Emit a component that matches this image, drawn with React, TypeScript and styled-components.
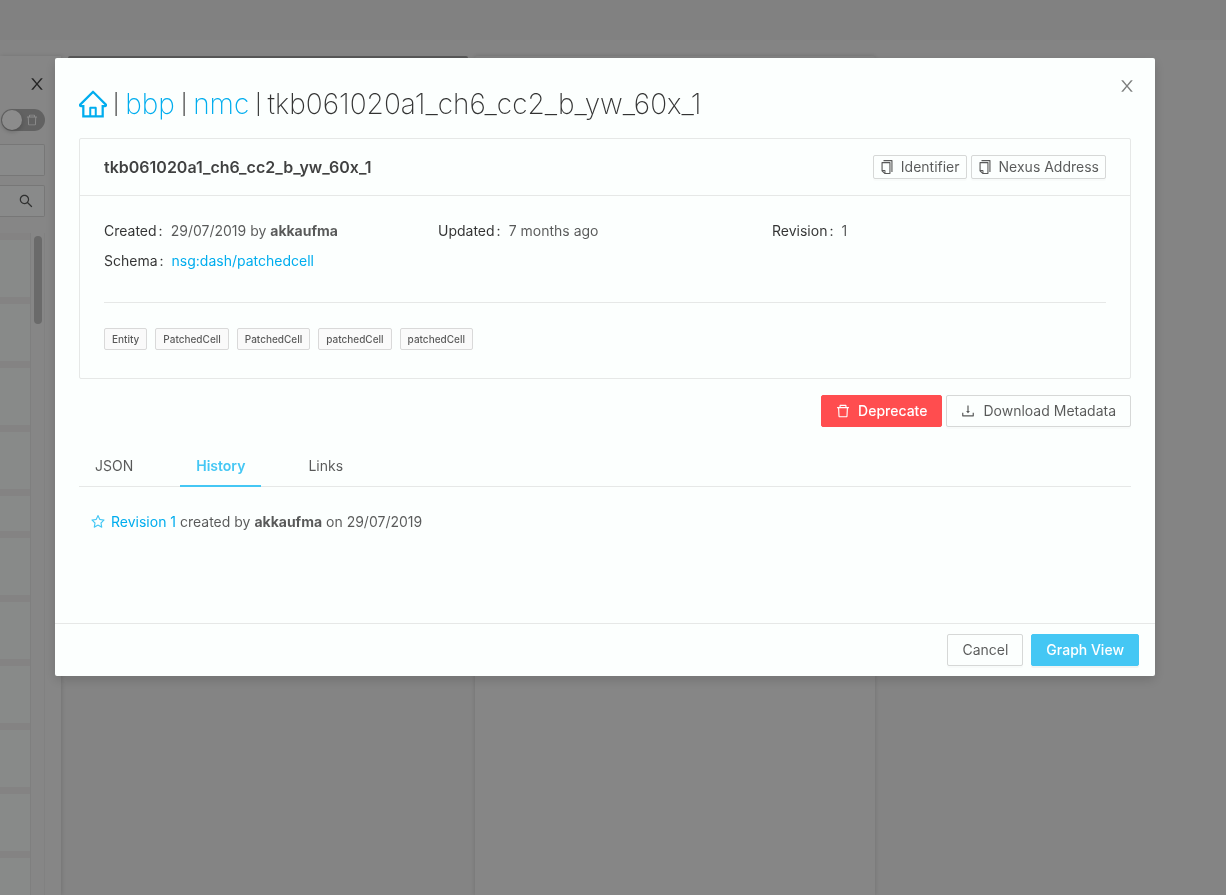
import React from 'react';
import styled, { createGlobalStyle, css } from 'styled-components';
import {
  AiOutlineCopy,
  AiOutlineDelete,
  AiOutlineDownload,
  AiOutlineHome,
  AiOutlineSearch,
  AiOutlineStar,
} from 'react-icons/ai';

const GlobalStyle = createGlobalStyle`
  *, *::before, *::after { box-sizing: border-box; }
  body {
    margin: 0;
    font-family: Inter, "Liberation Sans", sans-serif;
    font-size: 14px;
    line-height: 22px;
    color: rgba(0, 0, 0, 0.65);
  }
  button, input { font: inherit; color: inherit; }
  a { color: #00adee; text-decoration: none; }
  strong { font-weight: 700; }
  svg { display: block; flex: none; }
`;

/* The icon artwork keeps a 64-unit margin; this view box trims it. */
const TRIMMED = '64 64 896 896';

const CloseIcon = ({ size = 16 }: { size?: number }) => (
  <svg width={size} height={size} viewBox={TRIMMED} fill="currentColor" aria-hidden="true">
    <path d="M563.8 512l262.5-312.9c4.4-5.2.7-13.1-6.1-13.1h-79.8c-4.7 0-9.2 2.1-12.3 5.7L511.6 449.8 295.1 191.7c-3-3.6-7.5-5.7-12.3-5.7H203c-6.8 0-10.5 7.9-6.1 13.1L459.4 512 196.9 824.9A7.95 7.95 0 0 0 203 838h79.8c4.7 0 9.2-2.1 12.3-5.7l216.5-258.1 216.5 258.1c3 3.6 7.5 5.7 12.3 5.7h79.8c6.8 0 10.5-7.9 6.1-13.1L563.8 512z" />
  </svg>
);

/* ---------- workspace behind the dialog ---------- */

const Workspace = styled.div`
  height: 100vh;
  overflow: hidden;
  display: flex;
  flex-direction: column;
  background: #f0f0f0;
`;

const TopBar = styled.header`
  flex: none;
  height: 40px;
  background: #ececec;
`;

const Columns = styled.div`
  flex: 1;
  min-height: 0;
  display: flex;
  padding-top: 16px;
`;

const Sidebar = styled.aside`
  flex: none;
  width: 61px;
  padding: 20px 16px 0 0;
  display: flex;
  flex-direction: column;
  overflow: hidden;
  background: #f4f4f4;
  box-shadow: 1px 0 4px rgba(0, 0, 0, 0.12);
`;

const SidebarClose = styled.button`
  align-self: flex-end;
  padding: 0;
  margin-bottom: 17px;
  border: 0;
  background: none;
  color: #444;
`;

const Toggle = styled.button`
  align-self: flex-end;
  flex: none;
  width: 44px;
  height: 22px;
  margin-bottom: 13px;
  padding: 0 7px 0 1px;
  display: flex;
  align-items: center;
  justify-content: space-between;
  border: 0;
  border-radius: 11px;
  background: #b2b2b2;
  color: #fff;
`;

const Knob = styled.span`
  width: 20px;
  height: 20px;
  border-radius: 50%;
  background: #fff;
  box-shadow: 0 2px 4px rgba(0, 0, 0, 0.2);
`;

const Field = styled.label`
  flex: none;
  height: 32px;
  margin-bottom: 9px;
  padding-right: 11px;
  display: flex;
  align-items: center;
  border: 1px solid #d9d9d9;
  border-left: 0;
  border-radius: 0 2px 2px 0;
  background: #fafcfb;

  input {
    flex: 1;
    width: 0;
    padding: 0;
    border: 0;
    outline: 0;
    background: none;
  }
`;

const ListFrame = styled.div`
  flex: 1;
  min-height: 0;
  margin-top: 7px;
  display: flex;
  border-right: 1px solid #ececec;
`;

const List = styled.ul`
  flex: 1;
  margin: 0;
  padding: 7px 0 0;
  overflow: hidden;
  list-style: none;
  background: #f0eeee;
  border-right: 1px solid #e8e8e8;
`;

const ListItem = styled.li<{ $short?: boolean }>`
  height: ${p => (p.$short ? 35 : 57)}px;
  margin-bottom: 7px;
  background: #f8fbf9;
`;

const ScrollTrack = styled.div`
  width: 13px;
  padding: 3px 2px 3px 3px;
`;

const ScrollThumb = styled.div`
  height: 88px;
  border-radius: 4px;
  background: #c1c1c1;
`;

const Panel = styled.section<{ $selected?: boolean }>`
  flex: none;
  width: 400px;
  margin-left: 7px;
  border-top: 2px solid ${p => (p.$selected ? '#a0a0a0' : '#ececec')};
  border-radius: 2px 2px 0 0;
  background: ${p => (p.$selected ? '#f0f0f0' : '#f4f4f4')};
  box-shadow: ${p => (p.$selected ? 'none' : '0 0 4px rgba(0, 0, 0, 0.14)')};
`;

/* ---------- dialog ---------- */

const Overlay = styled.div`
  position: fixed;
  inset: 0;
  padding: 58px 16px 24px 0;
  overflow: auto;
  background: rgba(0, 0, 0, 0.45);
`;

const Dialog = styled.div`
  position: relative;
  width: 100%;
  max-width: 1100px;
  margin: 0 auto;
  border-radius: 2px;
  background: #fcfffe;
  box-shadow: 0 4px 12px rgba(0, 0, 0, 0.15);
`;

const DialogClose = styled.button`
  position: absolute;
  top: 20px;
  right: 20px;
  padding: 0;
  border: 0;
  background: none;
  color: rgba(0, 0, 0, 0.5);
`;

const DialogBody = styled.div`
  padding: 24px;
`;

const Breadcrumb = styled.h1`
  margin: 0 0 12px;
  display: flex;
  align-items: center;
  gap: 6px;
  font-size: 28px;
  font-weight: 200;
  line-height: 44px;
  white-space: nowrap;
  color: rgba(0, 0, 0, 0.8);
`;

const Separator = styled.span`
  font-size: 20px;
  font-weight: 300;
`;

const Card = styled.section`
  border: 1px solid #e6e8e7;
  border-radius: 2px;
`;

const CardHead = styled.div`
  min-height: 57px;
  padding: 0 24px;
  display: flex;
  align-items: center;
  justify-content: space-between;
  border-bottom: 1px solid #e6e8e7;
`;

const CardTitle = styled.h2`
  margin: 0;
  font-size: 16px;
  font-weight: 600;
  line-height: 24px;
  color: rgba(0, 0, 0, 0.75);
`;

const CardBody = styled.div`
  padding: 24px 24px 28px;
`;

const Details = styled.dl`
  margin: 0;
  padding-bottom: 30px;
  display: grid;
  grid-template-columns: repeat(3, 1fr);
  row-gap: 8px;
  border-bottom: 1px solid #e6e8e7;
`;

const Detail = styled.div`
  display: flex;

  dt {
    color: rgba(0, 0, 0, 0.8);
  }
  dt::after {
    content: ':';
    margin: 0 8px 0 2px;
  }
  dd {
    margin: 0;
  }
`;

const Tags = styled.div`
  display: flex;
  gap: 8px;
  margin-top: 25px;
`;

const Tag = styled.span`
  padding: 0 7px;
  border: 1px solid #d9d9d9;
  border-radius: 2px;
  background: #fafafa;
  font-size: 10px;
  font-weight: 500;
  line-height: 20px;
`;

const ButtonRow = styled.div<{ $gap?: number }>`
  display: flex;
  justify-content: flex-end;
  gap: ${p => p.$gap ?? 4}px;
`;

const Actions = styled(ButtonRow)`
  margin: 16px 0;
`;

const tones = {
  plain: css`
    border-color: #d6d8d7;
    background: #fcfffe;
    box-shadow: 0 2px 0 rgba(0, 0, 0, 0.015);
  `,
  danger: css`
    border-color: #ff4d4f;
    background: #ff4d4f;
    color: #fff;
    font-weight: 500;
  `,
  primary: css`
    border-color: #44c7f4;
    background: #44c7f4;
    color: #fff;
    font-weight: 500;
    box-shadow: 0 2px 0 rgba(0, 0, 0, 0.045);
  `,
};

const Button = styled.button<{ $tone?: keyof typeof tones; $small?: boolean }>`
  height: ${p => (p.$small ? 24 : 32)}px;
  padding: 0 ${p => (p.$small ? 6 : 14)}px;
  display: flex;
  align-items: center;
  gap: ${p => (p.$small ? 7 : 8)}px;
  border: 1px solid;
  border-radius: 2px;
  white-space: nowrap;
  ${p => tones[p.$tone ?? 'plain']}
`;

const Tabs = styled.div`
  display: flex;
  gap: 31px;
  border-bottom: 1px solid #e6e8e7;
`;

const Tab = styled.button<{ $active?: boolean }>`
  height: 44px;
  margin-bottom: -1px;
  padding: 4px 16px 0;
  border: 0;
  border-bottom: 2px solid ${p => (p.$active ? '#44c7f4' : 'transparent')};
  background: none;
  color: ${p => (p.$active ? '#44c7f4' : 'inherit')};
  font-weight: ${p => (p.$active ? 600 : 400)};
`;

const TabPanel = styled.div`
  min-height: 112px;
  padding: 24px 12px;
`;

const HistoryEntry = styled.div`
  display: flex;
  align-items: center;
  gap: 6px;

  svg {
    color: #44c7f4;
  }
`;

const DialogFooter = styled.footer`
  padding: 10px 16px;
  border-top: 1px solid #e6e8e7;
`;

const tags = ['Entity', 'PatchedCell', 'PatchedCell', 'patchedCell', 'patchedCell'];
const listItems = Array.from({ length: 12 }, (_, i) => i);

export default function App() {
  return (
    <>
      <GlobalStyle />
      <Workspace>
        <TopBar />
        <Columns>
          <Sidebar>
            <SidebarClose aria-label="Close panel">
              <CloseIcon />
            </SidebarClose>
            <Toggle role="switch" aria-checked="false" aria-label="Show deprecated">
              <Knob />
              <AiOutlineDelete size={12} viewBox={TRIMMED} />
            </Toggle>
            <Field>
              <input aria-label="Filter" />
            </Field>
            <Field>
              <input aria-label="Search" />
              <AiOutlineSearch size={14} viewBox={TRIMMED} />
            </Field>
            <ListFrame>
              <List>
                {listItems.map(i => (
                  <ListItem key={i} $short={i === 4} />
                ))}
              </List>
              <ScrollTrack>
                <ScrollThumb />
              </ScrollTrack>
            </ListFrame>
          </Sidebar>
          <Panel $selected />
          <Panel />
        </Columns>
      </Workspace>

      <Overlay>
        <Dialog role="dialog" aria-modal="true" aria-labelledby="resource-path">
          <DialogClose aria-label="Close">
            <CloseIcon />
          </DialogClose>
          <DialogBody>
            <Breadcrumb id="resource-path">
              <a href="#home" aria-label="Home">
                <AiOutlineHome size={28} viewBox={TRIMMED} />
              </a>
              <Separator>|</Separator>
              <a href="#bbp">bbp</a>
              <Separator>|</Separator>
              <a href="#nmc">nmc</a>
              <Separator>|</Separator>
              <span>tkb061020a1_ch6_cc2_b_yw_60x_1</span>
            </Breadcrumb>

            <Card>
              <CardHead>
                <CardTitle>tkb061020a1_ch6_cc2_b_yw_60x_1</CardTitle>
                <ButtonRow>
                  <Button $small>
                    <AiOutlineCopy size={14} viewBox={TRIMMED} />
                    Identifier
                  </Button>
                  <Button $small>
                    <AiOutlineCopy size={14} viewBox={TRIMMED} />
                    Nexus Address
                  </Button>
                </ButtonRow>
              </CardHead>
              <CardBody>
                <Details>
                  <Detail>
                    <dt>Created</dt>
                    <dd>
                      29/07/2019 by <strong>akkaufma</strong>
                    </dd>
                  </Detail>
                  <Detail>
                    <dt>Updated</dt>
                    <dd>7 months ago</dd>
                  </Detail>
                  <Detail>
                    <dt>Revision</dt>
                    <dd>1</dd>
                  </Detail>
                  <Detail>
                    <dt>Schema</dt>
                    <dd>
                      <a href="#schema">nsg:dash/patchedcell</a>
                    </dd>
                  </Detail>
                </Details>
                <Tags>
                  {tags.map((tag, i) => (
                    <Tag key={i}>{tag}</Tag>
                  ))}
                </Tags>
              </CardBody>
            </Card>

            <Actions>
              <Button $tone="danger">
                <AiOutlineDelete size={14} viewBox={TRIMMED} />
                Deprecate
              </Button>
              <Button>
                <AiOutlineDownload size={14} viewBox={TRIMMED} />
                Download Metadata
              </Button>
            </Actions>

            <Tabs role="tablist">
              <Tab role="tab">JSON</Tab>
              <Tab role="tab" aria-selected="true" $active>
                History
              </Tab>
              <Tab role="tab">Links</Tab>
            </Tabs>
            <TabPanel role="tabpanel">
              <HistoryEntry>
                <AiOutlineStar size={14} viewBox={TRIMMED} />
                <span>
                  <a href="#revision-1">Revision 1</a> created by <strong>akkaufma</strong> on
                  29/07/2019
                </span>
              </HistoryEntry>
            </TabPanel>
          </DialogBody>
          <DialogFooter>
            <ButtonRow $gap={8}>
              <Button>Cancel</Button>
              <Button $tone="primary">Graph View</Button>
            </ButtonRow>
          </DialogFooter>
        </Dialog>
      </Overlay>
    </>
  );
}
